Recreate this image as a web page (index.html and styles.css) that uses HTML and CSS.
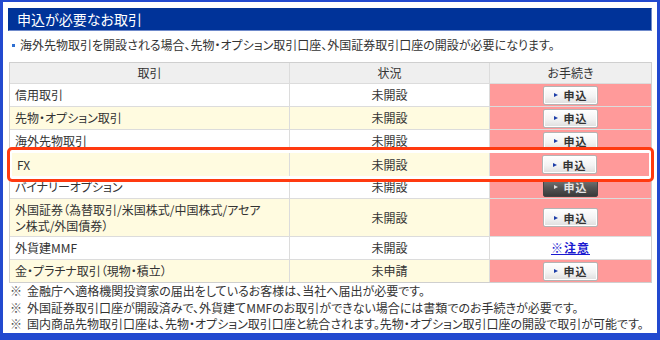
FILE: index.html
```html
<!DOCTYPE html>
<html lang="ja">
<head>
<meta charset="utf-8">
<link rel="stylesheet" href="styles.css">
</head>
<body>
<div class="frame">
  <div class="panel">
    <h2 class="title">申込が必要なお取引</h2>
    <p class="lead"><span class="dot"></span>海外先物取引を開設される場合、先物・オプション取引口座、外国証券取引口座の開設が必要になります。</p>
    <div class="table">
      <div class="row head"><div class="c1">取引</div><div class="c2">状況</div><div class="c3">お手続き</div></div>
      <div class="row"><div class="c1">信用取引</div><div class="c2">未開設</div><div class="c3 pink"><span class="btn"><i></i>申込</span></div></div>
      <div class="row alt"><div class="c1">先物・オプション取引</div><div class="c2">未開設</div><div class="c3 pink"><span class="btn"><i></i>申込</span></div></div>
      <div class="row"><div class="c1">海外先物取引</div><div class="c2">未開設</div><div class="c3 pink"><span class="btn"><i></i>申込</span></div></div>
      <div class="hl">
        <div class="row alt"><div class="c1">FX</div><div class="c2">未開設</div><div class="c3 pink"><span class="btn"><i></i>申込</span></div></div>
      </div>
      <div class="row"><div class="c1">バイナリーオプション</div><div class="c2">未開設</div><div class="c3 pink"><span class="btn dark"><i></i>申込</span></div></div>
      <div class="row alt tall"><div class="c1">外国証券（為替取引/米国株式/中国株式/アセア<br>ン株式/外国債券）</div><div class="c2">未開設</div><div class="c3 pink"><span class="btn"><i></i>申込</span></div></div>
      <div class="row"><div class="c1">外貨建MMF</div><div class="c2">未開設</div><div class="c3"><a class="link" href="#">※注意</a></div></div>
      <div class="row alt last"><div class="c1">金・プラチナ取引（現物・積立）</div><div class="c2">未申請</div><div class="c3 pink"><span class="btn"><i></i>申込</span></div></div>
    </div>
    <ul class="notes">
      <li><span class="mark">※</span>金融庁へ適格機関投資家の届出をしているお客様は、当社へ届出が必要です。</li>
      <li><span class="mark">※</span>外国証券取引口座が開設済みで、外貨建てMMFのお取引ができない場合には書類でのお手続きが必要です。</li>
      <li><span class="mark">※</span>国内商品先物取引口座は、先物・オプション取引口座と統合されます。先物・オプション取引口座の開設で取引が可能です。</li>
    </ul>
  </div>
</div>
</body>
</html>
```

FILE: styles.css
```css
* { box-sizing: border-box; }
html, body { margin: 0; padding: 0; }
body {
  font-family: "Noto Sans CJK JP", "Noto Sans", sans-serif;
  font-feature-settings: "palt";
  color: #333;
  font-size: 12px;
  background: #fff;
}
.frame {
  width: 660px;
  height: 340px;
  background: #2249cf;
  padding: 2px 3px 7px 3px;
}
.panel {
  background: #fff;
  height: 100%;
  padding: 6px 5px 0 5px;
}
.title {
  margin: 0;
  height: 23px;
  background: #003399;
  border: 1px solid #6f8acb;
  border-top-color: #003399;
  border-left-color: #003399;
  color: #fff;
  font-weight: normal;
  font-size: 14px;
  line-height: 21px;
  padding-left: 8px;
}
.lead {
  margin: 5px 0 8px 4px;
  line-height: 18px;
  font-size: 12px;
  display: flex;
  align-items: center;
}
.dot {
  width: 3px;
  height: 3px;
  background: #2d6fd2;
  margin-right: 5px;
}
.table {
  margin-left: 1px;
  border: 1px solid #cfcfcf;
}
.row {
  display: grid;
  grid-template-columns: 280px 200px 1fr;
  height: 23px;
  border-bottom: 1px solid #dcdcdc;
  background: #fff;
}
.row.alt { background: #fffbe0; }
.row.last { border-bottom: none; height: 22px; }
.row.tall { height: 38px; }
.row > div {
  display: flex;
  align-items: center;
  border-right: 1px solid #dcdcdc;
  line-height: 16px;
}
.row > div:last-child { border-right: none; }
.c1 { padding-left: 5px; }
.c2, .c3 { justify-content: center; }
.head { background: #efefef; height: 21px; }
.head .c1 { justify-content: center; padding-left: 0; }
.pink { background: #ff9a9a; }
.hl {
  position: relative;
  z-index: 1;
  margin: -6px -3px -6px -3px;
  border: 3px solid #ff3a10;
  border-radius: 5px;
  padding: 3px 2px;
  background: #fff;
}
.hl .row {
  border-bottom: none;
  grid-template-columns: 278px 200px 1fr;
}
.btn {
  width: 55px;
  height: 19px;
  border: 1px solid #b4b4b4;
  border-radius: 2px;
  background: linear-gradient(#ffffff, #f3f3f3 55%, #dedede);
  display: flex;
  align-items: center;
  justify-content: center;
  font-size: 11px;
  font-weight: bold;
  letter-spacing: 1px;
  color: #333;
  box-shadow: inset 0 0 0 1px #fff;
}
.btn i {
  width: 0;
  height: 0;
  border-left: 4px solid #1d3ea8;
  border-top: 2.5px solid transparent;
  border-bottom: 2.5px solid transparent;
  margin-right: 6px;
}
.btn.dark {
  background: linear-gradient(#7a7a7a, #555 50%, #3a3a3a);
  border-color: #444;
  color: #e6e6e6;
  box-shadow: inset 0 1px 0 #888;
}
.btn.dark i { border-left-color: #ddd; }
.link {
  color: #1a1ad0;
  text-decoration: underline;
  font-weight: bold;
  letter-spacing: 1px;
}
.notes {
  list-style: none;
  margin: 0;
  padding: 0 0 0 2px;
}
.notes li {
  display: flex;
  line-height: 16.5px;
  font-size: 12px;
}
.mark {
  width: 17px;
  flex: none;
  color: #555;
}
```
